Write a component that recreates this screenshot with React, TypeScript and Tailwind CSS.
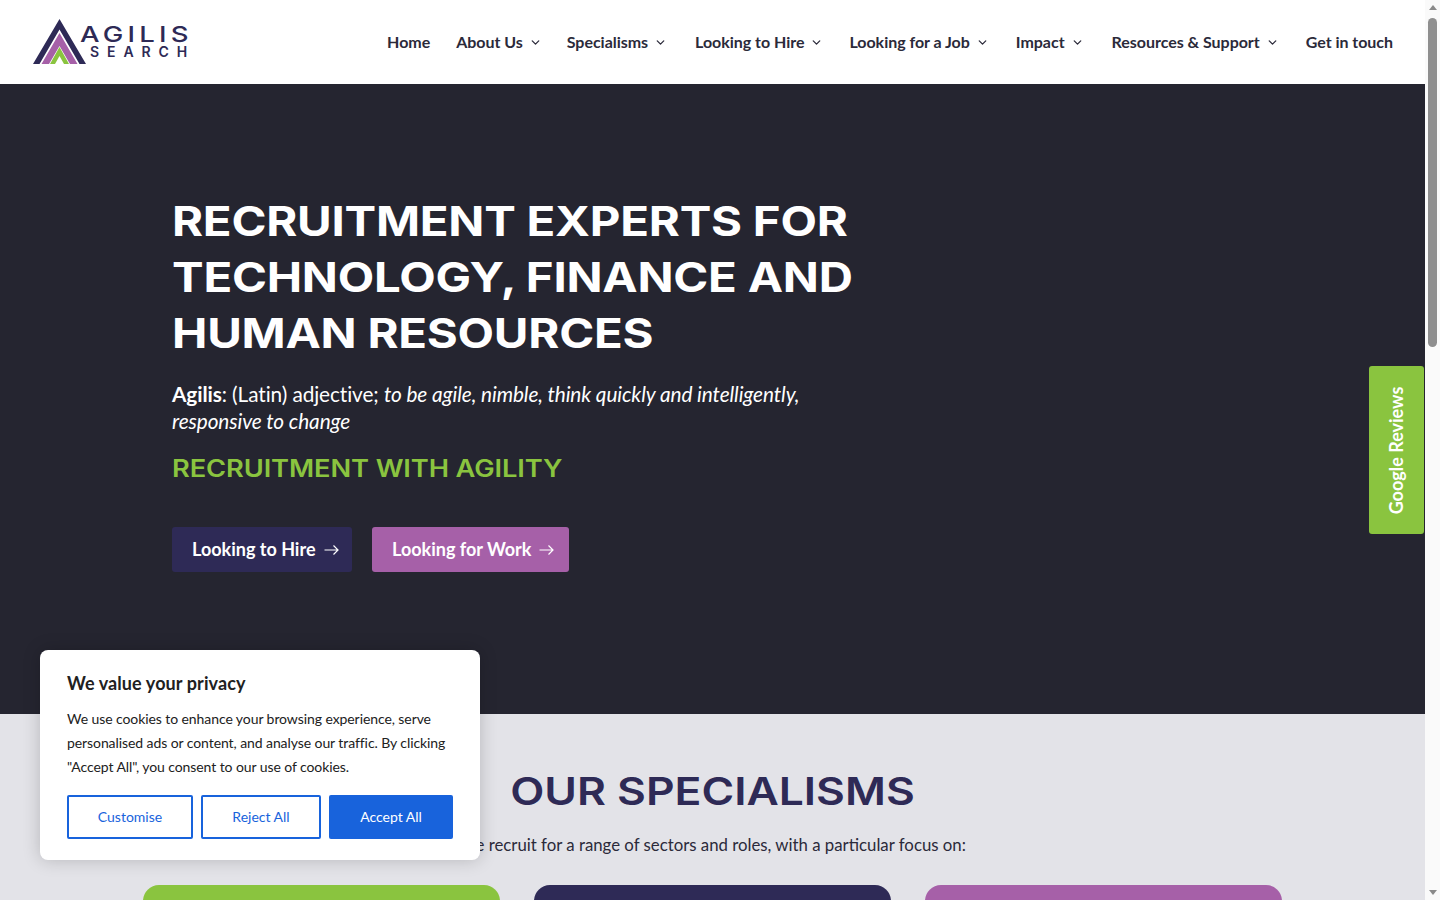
import { ChevronDown } from "lucide-react";

const nav = [
  { t: "Home", c: false, w: "mr-[26px]" },
  { t: "About Us", c: true, w: "mr-[25px]" },
  { t: "Specialisms", c: true, w: "mr-[28px]" },
  { t: "Looking to Hire", c: true, w: "mr-[26px]" },
  { t: "Looking for a Job", c: true, w: "mr-[27px]" },
  { t: "Impact", c: true, w: "mr-[28px]" },
  { t: "Resources & Support", c: true, w: "mr-[27px]" },
  { t: "Get in touch", c: false, w: "" },
];

function Arrow() {
  return (
    <svg width="15" height="12" viewBox="0 0 15 12" fill="none" stroke="currentColor" strokeWidth="1.2" className="ml-2">
      <path d="M0.5 6H14M9.5 1.5L14 6L9.5 10.5" />
    </svg>
  );
}

function Logo() {
  return (
    <div className="relative h-[50px] w-[160px] font-['Inter',sans-serif] text-[#2e2a56]">
      <svg width="54" height="48" viewBox="0 0 54 48" className="absolute left-0 top-[1px]">
        <path d="M26.5 1L53 46H46.5L26.5 11.5L6.5 46H0Z" fill="#2e2a56" />
        <path d="M26.5 15L44.5 46H37L26.5 28L16 46H8.5Z" fill="#a660a8" />
        <path d="M26.5 29L36 46H31L26.5 38L22 46H17Z" fill="#8ac43f" />
      </svg>
      <span className="absolute left-[47px] top-[6px] origin-left scale-x-[1.25] text-[22px] font-medium leading-[22px] tracking-[3.4px]">AGILIS</span>
      <span className="absolute left-[57px] top-[28px] text-[14px] font-semibold leading-[14px] tracking-[7.9px]">SEARCH</span>
    </div>
  );
}

export default function App() {
  return (
    <div className="relative flex h-[900px] w-[1440px] overflow-hidden bg-white font-['Lato',sans-serif]">
      <main className="flex w-[1425px] flex-col">
        <header className="flex h-[84px] shrink-0 items-center justify-between bg-white pl-[33px] pr-[32px]">
          <Logo />
          <nav className="flex items-center text-[16px] font-bold tracking-[-0.03px] text-[#2b2a3a]">
            {nav.map((n) => (
              <span key={n.t} className={`flex items-center whitespace-nowrap ${n.w}`}>
                {n.t}
                {n.c && <ChevronDown size={13} strokeWidth={2.4} className="ml-[6px] mt-[1px]" />}
              </span>
            ))}
          </nav>
        </header>

        <section className="h-[630px] shrink-0 bg-[#252530] pl-[172px] pt-[109px] text-white">
          <h1 className="origin-left scale-x-[1.155] whitespace-pre-line font-['Inter',sans-serif] text-[41px] font-bold leading-[56px] tracking-[-0.2px]">
            {"RECRUITMENT EXPERTS FOR\nTECHNOLOGY, FINANCE AND\nHUMAN RESOURCES"}
          </h1>
          <p className="mt-[19px] w-[660px] text-[20.8px] leading-[27px] tracking-[-0.09px]">
            <strong className="font-bold">Agilis</strong>: (Latin) adjective;{" "}
            <em>to be agile, nimble, think quickly and intelligently, responsive to change</em>
          </p>
          <h2 className="mt-[19px] origin-left scale-x-[1.136] font-['Inter',sans-serif] text-[24px] font-semibold leading-[32px] tracking-[-0.1px] text-[#8ac43f]">
            RECRUITMENT WITH AGILITY
          </h2>
          <div className="mt-[42px] flex gap-5">
            <a className="flex h-[45px] w-[180px] items-center rounded-[3px] bg-[#2e2a56] pl-5 text-[18px] font-bold">
              Looking to Hire
              <Arrow />
            </a>
            <a className="flex h-[45px] w-[197px] items-center rounded-[3px] bg-[#a660a8] pl-5 text-[18px] font-bold">
              Looking for Work
              <Arrow />
            </a>
          </div>
        </section>

        <section className="flex-1 bg-[#e3e3e8] pt-[53px] text-center">
          <h2 className="scale-x-[1.168] font-['Inter',sans-serif] text-[38px] font-semibold leading-[48px] text-[#2e2a56]">
            OUR SPECIALISMS
          </h2>
          <p className="mt-[16px] text-[16.8px] leading-[27px] text-[#2b2a3a]">
            We recruit for a range of sectors and roles, with a particular focus on:
          </p>
          <div className="mt-[27px] flex justify-center gap-[34px]">
            <div className="h-[40px] w-[357px] rounded-t-[16px] bg-[#8ac43f]" />
            <div className="h-[40px] w-[357px] rounded-t-[16px] bg-[#2e2a56]" />
            <div className="h-[40px] w-[357px] rounded-t-[16px] bg-[#a660a8]" />
          </div>
        </section>
      </main>

      <div className="flex w-[15px] shrink-0 flex-col items-center justify-between bg-[#fafafa] py-[5px]">
        <div className="flex w-full flex-col items-center">
          <div className="h-0 w-0 border-x-[4.5px] border-b-[5px] border-x-transparent border-b-[#8a8a8a]" />
          <div className="mt-[8px] h-[329px] w-[9px] rounded-full bg-[#8f8f8f]" />
        </div>
        <div className="h-0 w-0 border-x-[4.5px] border-t-[5px] border-x-transparent border-t-[#8a8a8a]" />
      </div>

      <div className="absolute left-[1369px] top-[366px] flex h-[168px] w-[55px] items-center justify-center rounded-[3px] bg-[#8ac43f] text-white">
        <span className="-rotate-90 whitespace-nowrap text-[18px] font-bold">Google Reviews</span>
      </div>

      <div className="absolute left-[40px] top-[650px] h-[210px] w-[440px] rounded-[8px] bg-white px-[27px] pt-[21px] shadow-[0_0_18px_rgba(0,0,0,0.2)]">
        <h3 className="text-[18px] font-bold leading-[24px] tracking-[0.1px] text-[#212121]">We value your privacy</h3>
        <p className="mt-[12px] text-[14px] leading-[24px] tracking-[-0.08px] text-[#212121]">
          We use cookies to enhance your browsing experience, serve personalised ads or content, and analyse our traffic. By clicking "Accept All", you consent to our use of cookies.
        </p>
        <div className="mt-[16px] flex gap-2 text-[14px] leading-[20px]">
          <button className="h-[44px] w-[126px] rounded-[2px] border-2 border-[#1863dc] pb-[1px] text-[#1863dc]">Customise</button>
          <button className="h-[44px] w-[120px] rounded-[2px] border-2 border-[#1863dc] pb-[1px] text-[#1863dc]">Reject All</button>
          <button className="h-[44px] w-[124px] rounded-[2px] bg-[#1863dc] pb-[1px] text-white">Accept All</button>
        </div>
      </div>
    </div>
  );
}
